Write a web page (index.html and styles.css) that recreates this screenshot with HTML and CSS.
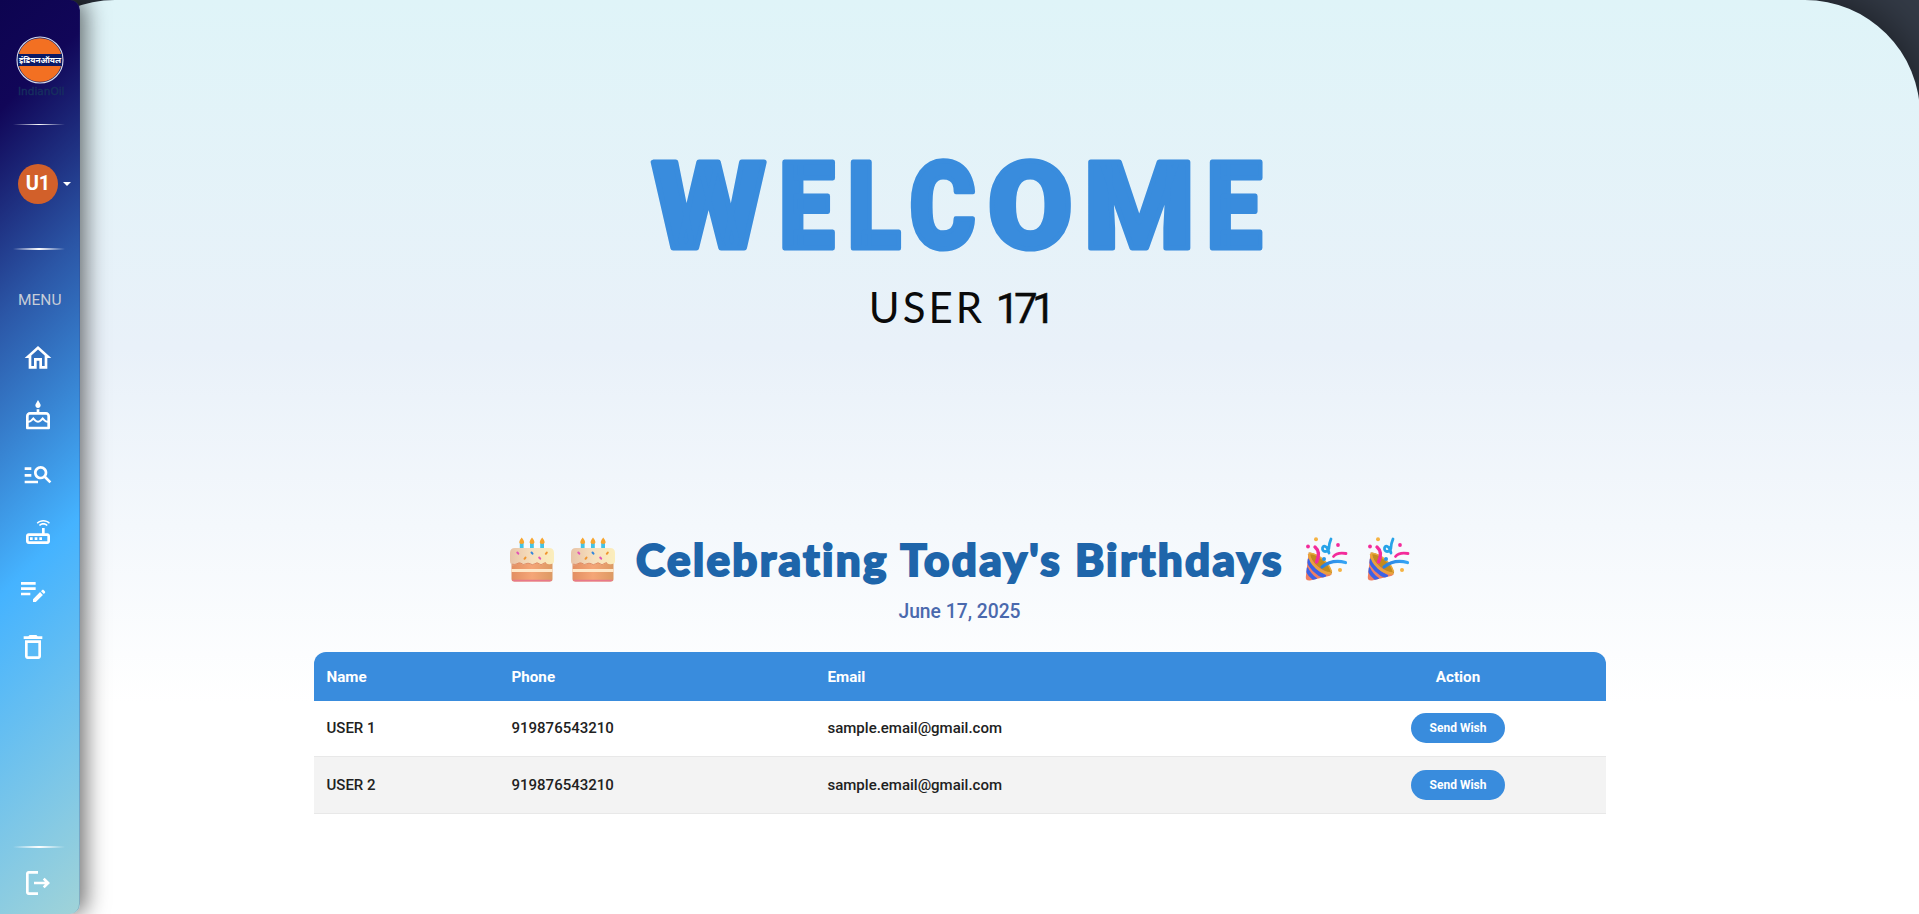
FILE: index.html
```html
<!DOCTYPE html>
<html lang="en">
<head>
<meta charset="utf-8">
<title>Welcome</title>
<link rel="stylesheet" href="styles.css">
</head>
<body>
<svg class="defs" width="0" height="0">
  <defs>
    <linearGradient id="icing" x1="0" x2="1"><stop offset="0" stop-color="#e8c4a8"/><stop offset=".5" stop-color="#f7dfbd"/><stop offset="1" stop-color="#fbeebc"/></linearGradient>
    <linearGradient id="sponge" x1="0" x2="1"><stop offset="0" stop-color="#e28f62"/><stop offset=".5" stop-color="#f5a677"/><stop offset="1" stop-color="#dc9a63"/></linearGradient>
    <linearGradient id="ribbon" x1="0" x2="1"><stop offset="0" stop-color="#2b7fe0"/><stop offset="1" stop-color="#35a5f5"/></linearGradient>
    <clipPath id="cone"><path d="M4.500 15.500C8 16 25 28 28 36Q29 38 25 39L6 43.500Q1.500 44 1.800 40Z"/></clipPath>
    <symbol id="cake" viewBox="0 0 46 45">
      <g fill="#45c3e4"><rect x="10.800" y="6" width="3.800" height="7"/><rect x="21" y="6" width="3.800" height="7"/><rect x="31.200" y="6" width="3.800" height="7"/></g>
      <g fill="#f7a42c"><path d="M12.700.500q5 6 0 6.500-5-.500 0-6.500zM23 .500q5 6 0 6.500-5-.500 0-6.500zM33.200.500q5 6 0 6.500-5-.500 0-6.500z"/></g>
      <path d="M2.500 22h41v20q0 2.500-2.500 2.500H5q-2.500 0-2.500-2.500z" fill="url(#sponge)"/>
      <path d="M2.500 32h41v3h-41z" fill="#ffe8c8"/>
      <path d="M3 42.800h40q-.5 1.700-2.500 1.700h-35q-2 0-2.500-1.700z" fill="#e8788a"/>
      <path d="M2 27q-1-1-1-3v-8q0-5 5-5h34q5 0 5 5v8q0 3-3 3-3 1-5-1-2 0-3 1-2 2-4 0t-4 0q-3 2-5 0-2-1-4 0-3 2-5-.500-2-1-4 .500-3 2-6 1z" fill="url(#icing)"/>
      <path d="M3 27.200q3 .800 5-.500 2-1.500 4-.500 2 2.500 5 .500 2-1 4 0 2 2 5 0 2-2 4 0t4 0q1-1 3-1" fill="none" stroke="#d97c57" stroke-width=".8"/>
      <g stroke-width="2" stroke-linecap="round"><path d="M8.300 15.500l1 1.200M30.200 20.500l1 1.200" stroke="#e255b5"/><path d="M22.500 15.500l1 1.200" stroke="#3287dd"/><path d="M36.800 16.800l1-1.200M15.500 21.800l1-1.200" stroke="#f0962f"/></g>
    </symbol>
    <symbol id="party" viewBox="0 0 44 45">
      <path d="M4.500 15.500C12 15 25 25 28 35Q28 38 24 38C17 36 6 26 4.500 15.500Z" fill="#c28a1e"/>
      <g clip-path="url(#cone)"><path d="M4.500 15.500Q10 31 28 37L25 40 2 46 0 38Z" fill="#ef7f63"/><path d="M3.500 22q5 13 18 18M2 31q3 7 10 12" fill="none" stroke="#3c62e6" stroke-width="4"/></g>
      <path d="M5 17C6 27 16 36 27 36.500" fill="none" stroke="#eaa33c" stroke-width="2.500"/>
      <path d="M5 16.500C13 16 25 25 27.500 35" fill="none" stroke="#e9a93d" stroke-width="1.500"/>
      <path d="M11 10q6 5 1.500 15" fill="none" stroke="#f32b9b" stroke-width="3.400" stroke-linecap="round"/>
      <path d="M29.500 19.500Q33 15 42 16.500" fill="none" stroke="#f32b9b" stroke-width="2.800" stroke-linecap="round"/>
      <path d="M18 30Q28 22 41.500 25.500" fill="none" stroke="url(#ribbon)" stroke-width="3.200" stroke-linecap="round"/>
      <path d="M27 2Q25 7 25 10c0 5-6 6-6.500 2s5-4.500 6.500 4" fill="none" stroke="#27a3e8" stroke-width="2.800" stroke-linecap="round"/>
      <g fill="#f32b9b"><circle cx="4" cy="9.500" r="1.900"/><circle cx="34" cy="8" r="1.900"/></g>
      <circle cx="20" cy="22" r="2" fill="#2b95e4"/>
      <g fill="#f5b343"><circle cx="12" cy="2.200" r="2"/><circle cx="36" cy="33" r="2"/></g>
    </symbol>
  </defs>
</svg>
<div class="app">
  <nav class="sidebar">
    <div class="logo">
      <svg width="48" height="48" viewBox="0 0 48 48">
        <circle cx="24" cy="24" r="22.600" fill="#f37022" stroke="#17206b" stroke-width="1.500"/>
        <circle cx="24" cy="24" r="23" fill="none" stroke="#d5d9ea" stroke-width="1.100"/>
        <rect x="2" y="18" width="44" height="12" fill="#0a1a66"/>
      </svg>
      <span class="logo-band">इंडियनऑयल</span>
      <span class="logo-name">IndianOil</span>
    </div>
    <hr class="rule rule-thin">
    <div class="account"><span class="avatar">U1</span><span class="caret"></span></div>
    <hr class="rule">
    <div class="menu-title">MENU</div>
    <div class="menu">
      <svg class="icon" viewBox="0 0 24 24"><path d="M12 5.690l5 4.500V18h-2v-6H9v6H7v-7.810l5-4.500M12 3L2 12h3v8h6v-6h2v6h6v-8h3L12 3z"/></svg>
      <svg class="icon" viewBox="0 0 24 24"><path d="M12 6c1.110 0 2-.9 2-2 0-.38-.1-.73-.29-1.030L12 0l-1.710 2.970c-.19.3-.29.65-.29 1.030 0 1.100.9 2 2 2zm6 3h-5V7h-2v2H6c-1.660 0-3 1.340-3 3v9c0 .55.45 1 1 1h16c.55 0 1-.45 1-1v-9c0-1.660-1.340-3-3-3zm1 11H5v-3c.9-.01 1.760-.37 2.400-1.010l1.090-1.070 1.070 1.070c1.310 1.310 3.590 1.300 4.890 0l1.080-1.070 1.070 1.070c.64.64 1.500 1 2.400 1.010v3zm0-4.500c-.51-.01-.99-.2-1.350-.57l-2.130-2.130-2.140 2.130c-.74.74-2.030.74-2.770 0L8.480 12.800l-2.140 2.130c-.35.36-.83.56-1.340.57V12c0-.55.45-1 1-1h12c.55 0 1 .45 1 1v3.500z"/></svg>
      <svg class="icon" viewBox="0 0 24 24"><path d="M7 9H2V7h5v2zm0 3H2v2h5v-2zm13.590 7l-3.830-3.830c-.8.52-1.740.83-2.760.83-2.760 0-5-2.240-5-5s2.240-5 5-5 5 2.240 5 5c0 1.020-.31 1.960-.83 2.750L22 17.590 20.590 19zM17 11c0-1.650-1.350-3-3-3s-3 1.350-3 3 1.350 3 3 3 3-1.350 3-3zM2 19h10v-2H2v2z"/></svg>
      <svg class="icon" viewBox="0 0 24 24"><path d="M20.200 5.900l.8-.8C19.600 3.700 17.800 3 16 3s-3.600.7-5 2.100l.8.8C13 4.800 14.500 4.200 16 4.200s3 .6 4.200 1.700zm-.9.8c-.9-.9-2.100-1.400-3.300-1.400s-2.400.5-3.300 1.400l.8.8c.7-.7 1.600-1 2.500-1s1.800.3 2.500 1l.8-.8zM19 13h-2V9h-2v4H5c-1.100 0-2 .9-2 2v4c0 1.100.9 2 2 2h14c1.100 0 2-.9 2-2v-4c0-1.100-.9-2-2-2zm0 6H5v-4h14v4zM6 16h2v2H6v-2zm3.500 0h2v2h-2v-2zm3.500 0h2v2h-2v-2z"/></svg>
      <svg class="icon icon-left" viewBox="0 0 24 24"><path d="M3 10h11v2H3v-2zm0-2h11V6H3v2zm0 8h7v-2H3v2zm15.010-3.130.71-.71c.39-.39 1.020-.39 1.410 0l.71.71c.39.39.39 1.020 0 1.410l-.71.71-2.120-2.120zm-.71.71-5.300 5.300V21h2.120l5.300-5.300-2.120-2.120z"/></svg>
      <svg class="icon icon-left icon-last" viewBox="0 0 24 24"><path d="M6 19c0 1.100.9 2 2 2h8c1.100 0 2-.9 2-2V7H6v12zM8 9h8v10H8V9zm7.500-5l-1-1h-5l-1 1H5v2h14V4h-3.500z"/></svg>
    </div>
    <div class="sidebar-foot">
      <hr class="rule">
      <svg class="icon" viewBox="0 0 24 24"><path d="M17 8l-1.410 1.410L17.170 11H9v2h8.170l-1.580 1.580L17 16l4-4-4-4zM5 5h7V3H5c-1.100 0-2 .9-2 2v14c0 1.100.9 2 2 2h7v-2H5V5z"/></svg>
    </div>
  </nav>
  <main class="page">
    <h1 class="welcome"><svg width="640" height="110" viewBox="0 0 640 110"><text transform="translate(12 98) scale(1.090 1)">W</text><text transform="translate(139 98) scale(.825 1)">E</text><text transform="translate(207.500 98) scale(.82 1)">L</text><text transform="translate(269.500 98) scale(.84 1)">C</text><text transform="translate(348 98) scale(1.020 1)">O</text><text transform="translate(444 98) scale(1.052 1)">M</text><text transform="translate(566.500 98) scale(.825 1)">E</text></svg></h1>
    <p class="user">USER <span class="user-no">171</span></p>
    <h2 class="birthdays">
      <span class="emoji-pair"><svg width="46" height="45"><use href="#cake"/></svg><svg width="46" height="45"><use href="#cake"/></svg></span>
      <span class="birthdays-text">Celebrating Today's Birthdays</span>
      <span class="emoji-pair party"><svg width="44" height="45"><use href="#party"/></svg><svg width="44" height="45"><use href="#party"/></svg></span>
    </h2>
    <p class="date">June 17, 2025</p>
    <table class="people">
      <thead><tr><th class="c-name">Name</th><th class="c-phone">Phone</th><th class="c-email">Email</th><th class="c-action">Action</th></tr></thead>
      <tbody>
        <tr><td>USER 1</td><td>919876543210</td><td>sample.email@gmail.com</td><td class="c-action"><button class="wish">Send Wish</button></td></tr>
        <tr><td>USER 2</td><td>919876543210</td><td>sample.email@gmail.com</td><td class="c-action"><button class="wish">Send Wish</button></td></tr>
      </tbody>
    </table>
  </main>
</div>
</body>
</html>
```

FILE: styles.css
```css
* { box-sizing: border-box; }
body { margin: 0; background: #343b47; font-family: Roboto, "Liberation Sans", sans-serif; overflow: hidden; }
.defs { position: absolute; }
.app { height: 914px; display: grid; grid-template-columns: 80px 1fr; }
.sidebar {
  grid-area: 1 / 1; z-index: 2; height: 914px; padding-top: 36px;
  display: flex; flex-direction: column;
  border-radius: 0 10px 10px 0;
  border-right: 1px solid rgba(50, 60, 120, .25);
  background: linear-gradient(135deg, #0d0450 0%, #110658 11%, #2b56a6 32%, #45b3ff 60%, #a0d3d8 100%) border-box;
  box-shadow: 6px 0 22px rgba(0, 0, 0, .55);
}
.logo { position: relative; height: 64px; padding-left: 16px; }
.logo svg { display: block; }
.logo-band { position: absolute; left: 16px; top: 17px; width: 48px; text-align: center; color: #fff; font: bold 8.200px/14px "Noto Sans", "Noto Sans Devanagari", sans-serif; white-space: nowrap; }
.logo-name { display: block; margin: 1px 0 0 2px; font: 10.500px/12px "DejaVu Sans", sans-serif; color: #16305f; white-space: nowrap; -webkit-text-stroke: .3px #16305f; }
.rule { width: 52px; height: 2px; margin: 0 0 0 13px; border: 0; background: linear-gradient(90deg, transparent, #fff 50%, transparent); flex: none; }
.rule-thin { height: 1px; margin-top: 24px; }
.account { display: flex; align-items: center; gap: 5px; padding-left: 18px; margin: 39px 0 44px; }
.avatar { width: 40px; height: 40px; border-radius: 50%; background: #d2602a; color: #fff; font-weight: 700; font-size: 20px; line-height: 39px; text-align: center; font-family: Roboto, sans-serif; }
.caret { border: 4px solid transparent; border-top-color: #fff; border-bottom: 0; }
.menu-title { margin: 40px 0 0 18px; font-size: 15.500px; line-height: 20px; color: #c6cdd8; }
.menu { display: flex; flex-direction: column; gap: 26px; padding: 32px 0 0 22px; }
.icon { width: 32px; height: 32px; fill: #fff; display: block; }
.icon-left { margin-left: -5px; }
.icon-last { margin-top: -1px; }
.sidebar-foot { margin-top: auto; padding-bottom: 15px; }
.sidebar-foot .icon { margin: 19px 0 0 22px; }
.page {
  grid-area: 1 / 1 / 2 / 3; height: 914px; margin-right: -1px; padding-right: 1px; border-radius: 115px 115px 0 0;
  background: linear-gradient(180deg, #dff4f8 0%, #e9f1f9 38%, #fff 77%);
  box-shadow: 0 0 50px rgba(0, 0, 0, .6);
  display: flex; flex-direction: column; align-items: center;
}
.welcome { margin: 150px 0 0; height: 110px; }
.welcome svg { display: block; overflow: visible; }
.welcome text { font: 900 120px Roboto, sans-serif; fill: #398cdd; stroke: #398cdd; stroke-width: 5px; stroke-linejoin: round; }
.user { margin: 21px 0 0; height: 52px; font: 400 42px/52px Lato, sans-serif; letter-spacing: 3px; word-spacing: -3px; color: #0a0a0a; }
.user-no { font-family: Roboto, sans-serif; letter-spacing: -5.500px; -webkit-text-stroke: .4px #0a0a0a; }
.birthdays { margin: 200px 0 0; height: 53px; display: flex; align-items: center; gap: 20px; color: #1e65aa; }
.emoji-pair { display: flex; gap: 15px; }
.party { gap: 18px; }
.birthdays-text { width: 648px; font: 900 44px/53px Lato, sans-serif; letter-spacing: 2.350px; white-space: nowrap; text-align: center; -webkit-text-stroke: 2px #1e65aa; }
.date { margin: 12px 0 0; font-size: 19.300px; line-height: 28px; font-weight: 500; color: #4a69ad; }
.people { width: 1292px; margin: 26px 0 0; table-layout: fixed; border-spacing: 0; font-size: 15px; font-weight: 500; color: #212121; }
th { height: 49px; padding: 0 13px; background: #398cdd; color: #fff; font-size: 15.200px; font-weight: 700; text-align: left; }
td { height: 56px; padding: 0 13px 1px; border-bottom: 1px solid #e8e8e8; background: #fff; }
tbody tr:nth-child(2) td { height: 57px; padding-bottom: 0; background: #f3f3f3; }
th:first-child { border-radius: 12px 0 0 0; }
th:last-child { border-radius: 0 12px 0 0; }
.c-name { width: 185px; }
.c-phone { width: 316px; }
.c-action { width: 295px; text-align: center; }
.wish { width: 94px; height: 30px; padding: 0; border: 0; border-radius: 15px; background: #398cdd; color: #fff; font: 700 12px/30px Roboto, sans-serif; display: block; margin: 0 auto; }
```
